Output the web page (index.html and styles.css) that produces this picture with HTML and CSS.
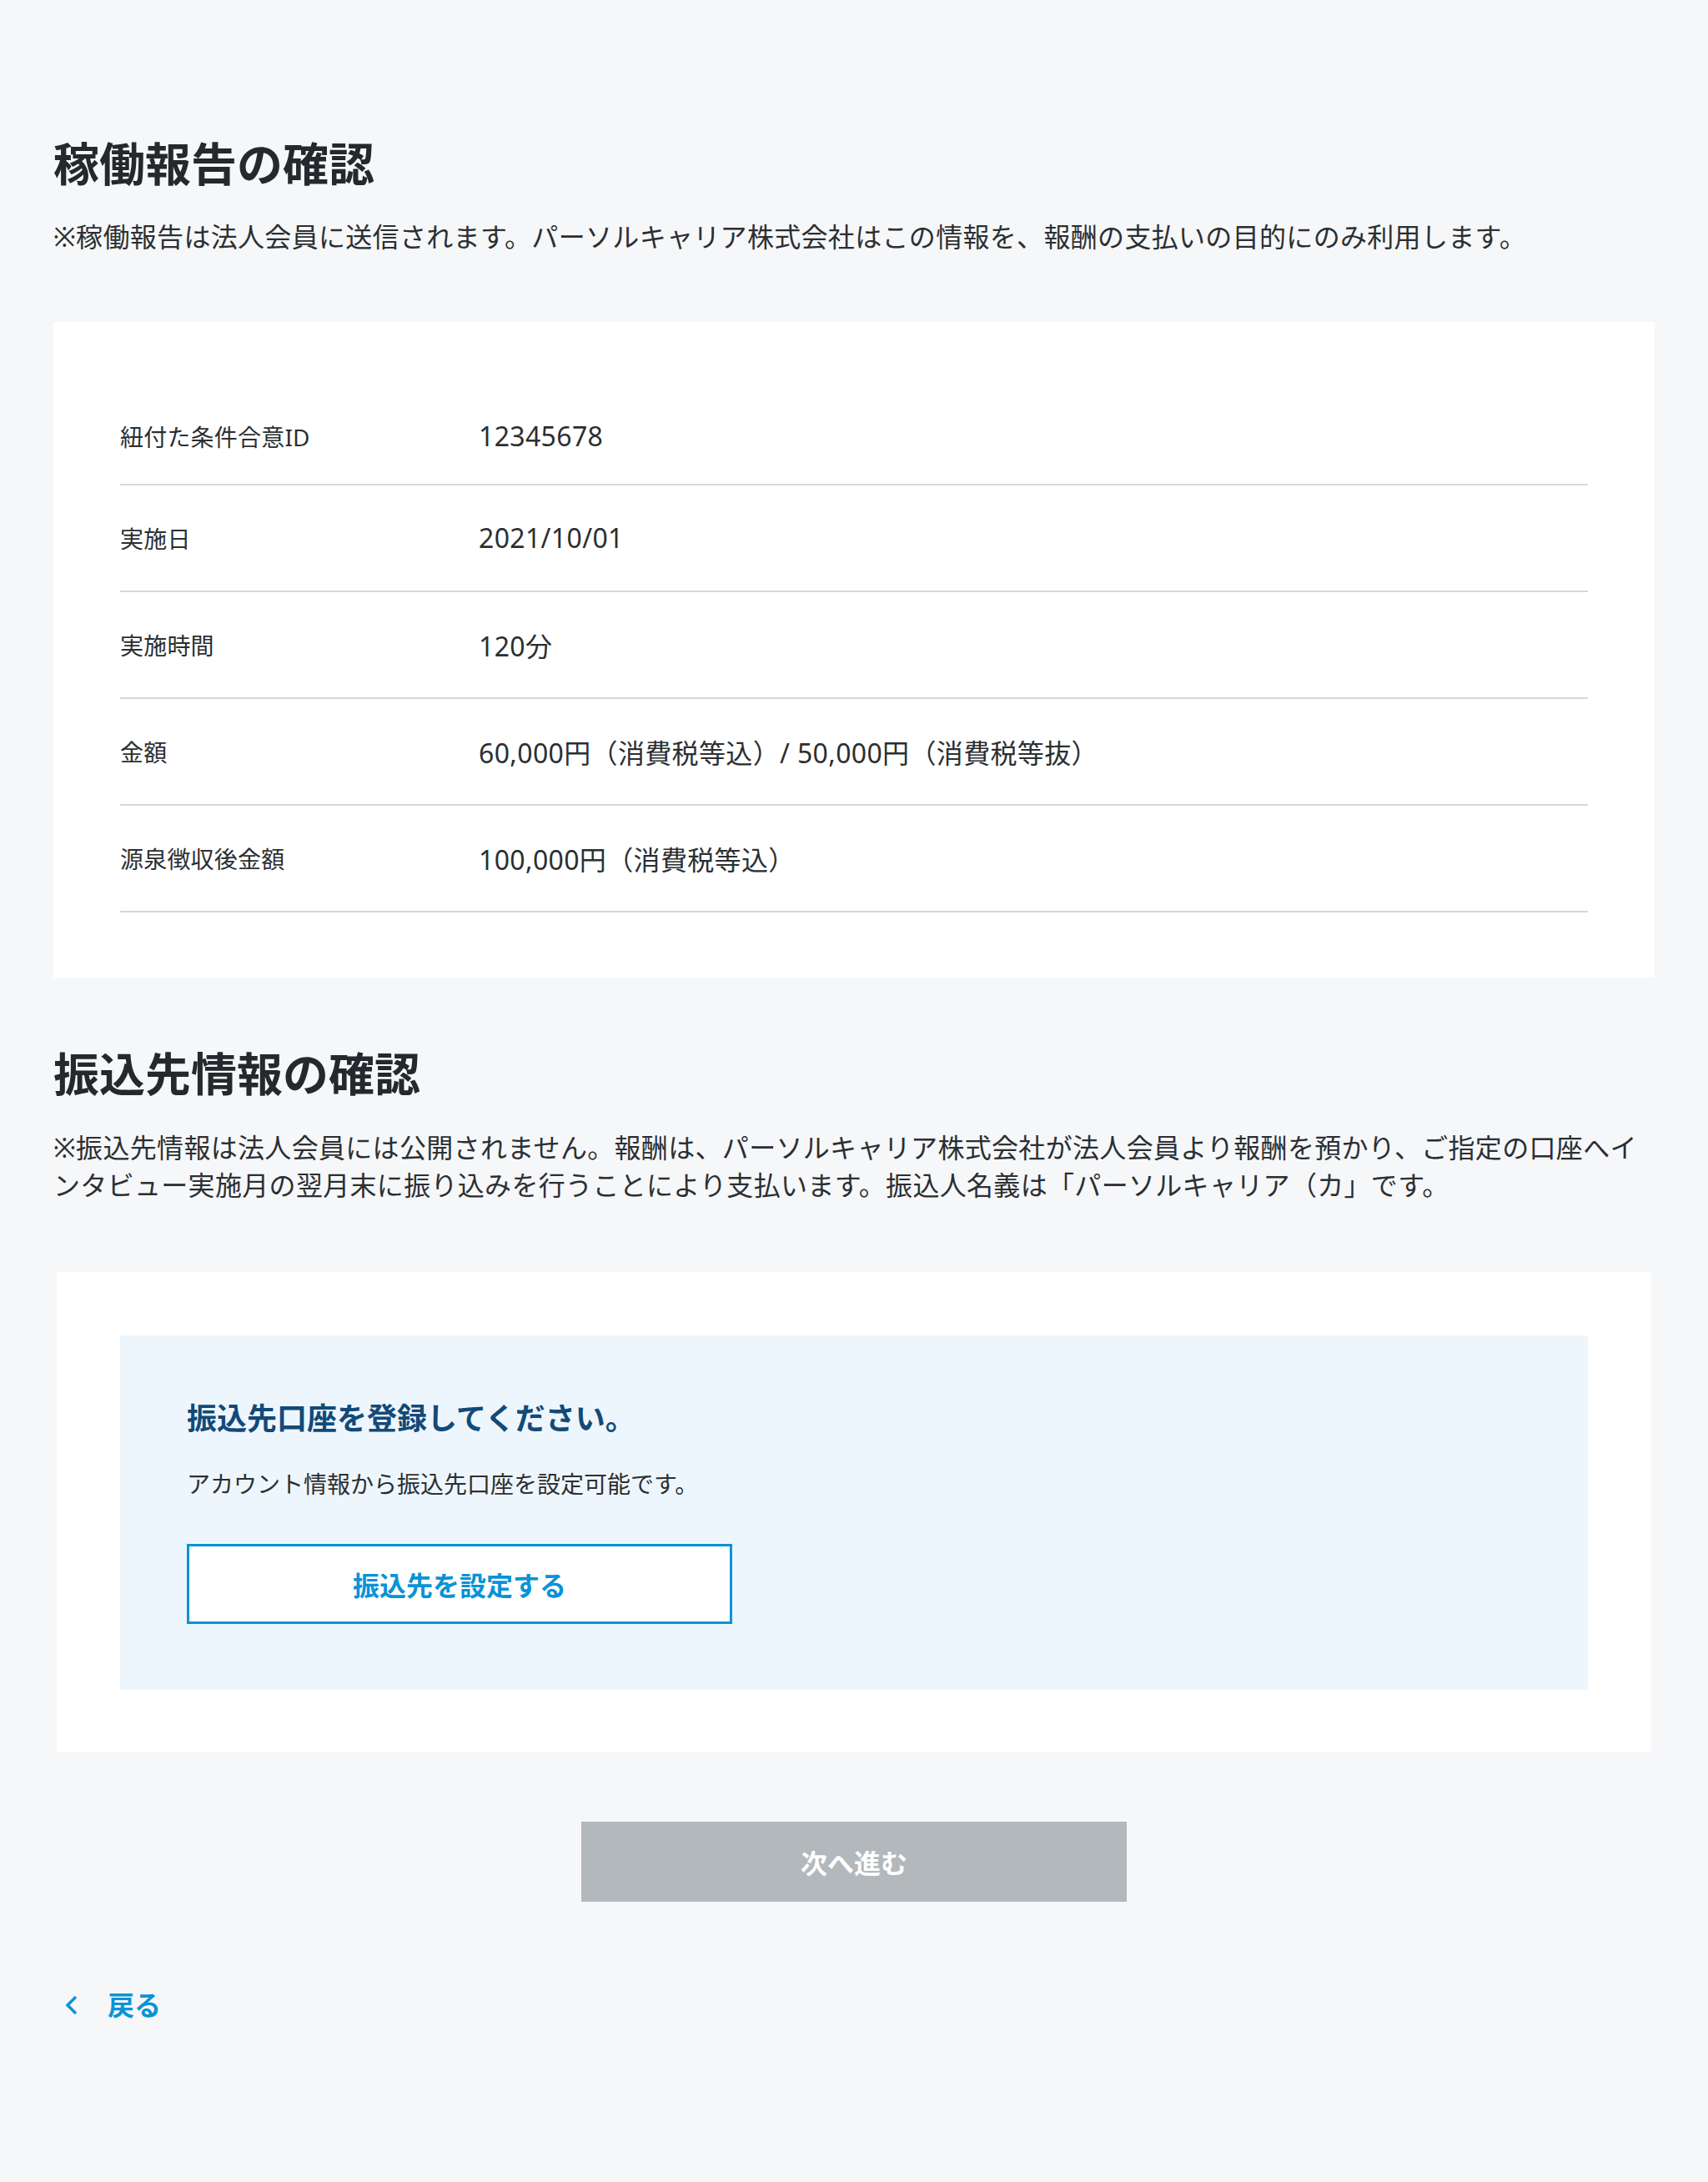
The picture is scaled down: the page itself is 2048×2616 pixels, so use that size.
FILE: index.html
```html
<!DOCTYPE html>
<html lang="ja">
<head>
    <meta charset="UTF-8">
    <meta name="viewport" content="width=device-width, initial-scale=1.0">
    <title>稼働報告の確認</title>
    <link rel="stylesheet" href="styles.css">
</head>
<body>
    <div class="page">
        <!-- 稼働報告 -->
        <h1 class="section-title">稼働報告の確認</h1>
        <p class="note">※稼働報告は法人会員に送信されます。パーソルキャリア株式会社はこの情報を、報酬の支払いの目的にのみ利用します。</p>

        <div class="card report-card">
            <div class="row">
                <div class="label">紐付た条件合意ID</div>
                <div class="value">12345678</div>
            </div>
            <div class="row">
                <div class="label">実施日</div>
                <div class="value">2021/10/01</div>
            </div>
            <div class="row">
                <div class="label">実施時間</div>
                <div class="value">120分</div>
            </div>
            <div class="row">
                <div class="label">金額</div>
                <div class="value">60,000円（消費税等込）/ 50,000円（消費税等抜）</div>
            </div>
            <div class="row">
                <div class="label">源泉徴収後金額</div>
                <div class="value">100,000円（消費税等込）</div>
            </div>
        </div>

        <!-- 振込先 -->
        <h1 class="section-title second">振込先情報の確認</h1>
        <p class="note">※振込先情報は法人会員には公開されません。報酬は、パーソルキャリア株式会社が法人会員より報酬を預かり、ご指定の口座へインタビュー実施月の翌月末に振り込みを行うことにより支払います。振込人名義は「パーソルキャリア（カ」です。</p>

        <div class="card bank-card">
            <div class="bank-box">
                <h2 class="bank-title">振込先口座を登録してください。</h2>
                <p class="bank-text">アカウント情報から振込先口座を設定可能です。</p>
                <button class="outline-button">振込先を設定する</button>
            </div>
        </div>

        <div class="actions">
            <button class="next-button" disabled>次へ進む</button>
        </div>

        <a class="back-link" href="#">
            <svg class="chevron" width="16" height="24" viewBox="0 0 16 24">
                <polyline points="13,2 3,12 13,22" fill="none" stroke="#0a93d6" stroke-width="3.4" />
            </svg>
            <span>戻る</span>
        </a>
    </div>
</body>
</html>
```

FILE: styles.css
```css
body {
    margin: 0;
    background-color: #f6f7f9;
    font-family: "Noto Sans", "Noto Sans CJK JP", sans-serif;
    color: #2b2f32;
}

.page {
    padding: 156px 64px 160px;
}

.section-title {
    margin: 0;
    font-size: 55px;
    line-height: 80px;
    font-weight: 700;
    color: #24292d;
}

.section-title.second {
    margin-top: 75px;
}

.note {
    margin: 26px 0 0;
    font-size: 32px;
    line-height: 1.4;
    letter-spacing: 0.32px;
}

.section-title.second + .note {
    margin-top: 27px;
}

.card {
    background-color: #fff;
}

.report-card {
    margin-top: 79px;
    padding: 80px 80px 78px;
}

.row {
    display: grid;
    grid-template-columns: 430px 1fr;
    align-items: center;
    min-height: 126px;
    border-bottom: 2px solid #d3d8dc;
}

.row:first-child {
    min-height: 114px;
}

.label {
    font-size: 28px;
    letter-spacing: 0.2px;
}

.value {
    font-size: 32px;
    letter-spacing: 0.35px;
}

.bank-card {
    margin: 82px 4px 0;
    padding: 76px 76px 75px;
}

.bank-box {
    background-color: #eef6fd;
    padding: 79px 80px 79px;
}

.bank-title {
    margin: 0;
    font-size: 36px;
    line-height: 42px;
    font-weight: 700;
    color: #124a78;
}

.bank-text {
    margin: 37px 0 0;
    font-size: 28px;
    line-height: 40px;
}

.outline-button {
    display: block;
    margin-top: 52px;
    width: 654px;
    height: 96px;
    background-color: #fff;
    border: 3px solid #0a93d6;
    color: #0a93d6;
    font-family: inherit;
    font-size: 32px;
    font-weight: 700;
    cursor: pointer;
}

.actions {
    display: flex;
    justify-content: center;
    margin-top: 83px;
}

.next-button {
    width: 654px;
    height: 96px;
    background-color: #b3b8bc;
    border: none;
    color: #fff;
    font-family: inherit;
    font-size: 32px;
    font-weight: 700;
}

.back-link {
    display: inline-flex;
    align-items: center;
    gap: 35px;
    margin: 102px 0 0 14px;
    color: #0a93d6;
    font-size: 32px;
    line-height: 44px;
    font-weight: 700;
    text-decoration: none;
}
```
